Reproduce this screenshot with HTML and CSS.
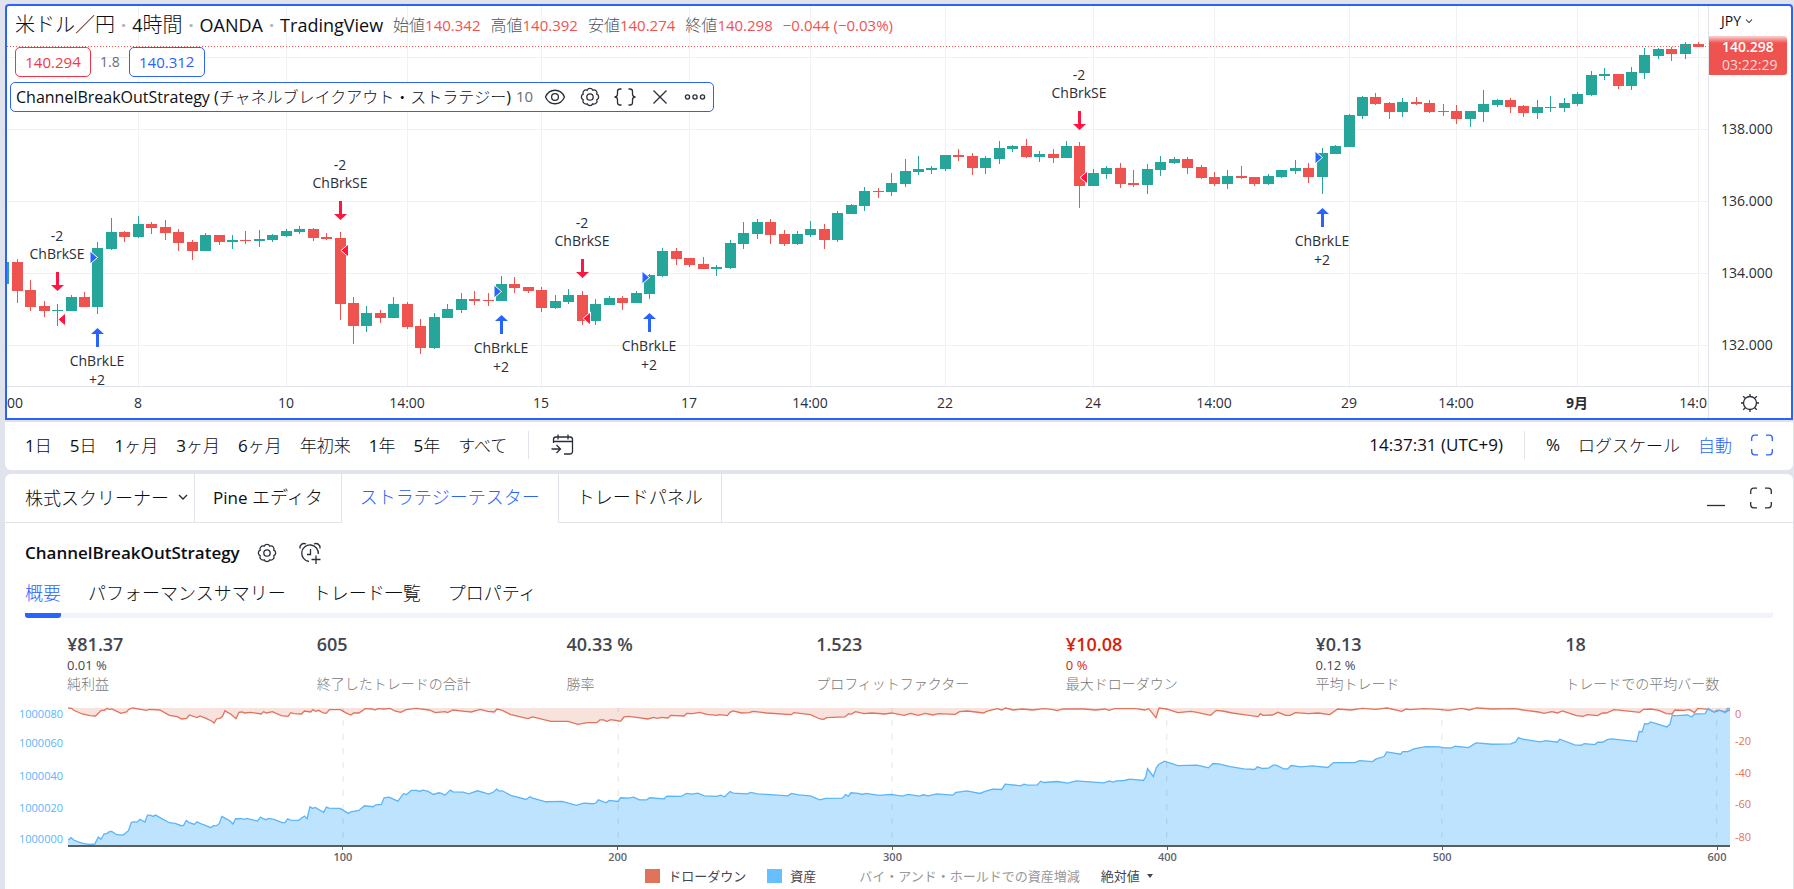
FILE: index.html
```html
<!DOCTYPE html>
<html lang="ja">
<head>
<meta charset="utf-8">
<title>米ドル／円 4時間</title>
<link rel="stylesheet" href="styles.css">
</head>
<body>
<svg class="defs" aria-hidden="true">
  <symbol id="gear" viewBox="0 0 24 24"><path d="M18.800 14.800A3.050 3.050 0 0 1 14.800 18.800A3.050 3.050 0 0 1 9.200 18.800A3.050 3.050 0 0 1 5.200 14.800A3.050 3.050 0 0 1 5.200 9.200A3.050 3.050 0 0 1 9.200 5.200A3.050 3.050 0 0 1 14.800 5.200A3.050 3.050 0 0 1 18.800 9.200A3.050 3.050 0 0 1 18.800 14.800Z"/><circle cx="12" cy="12" r="3.2"/></symbol>
  <symbol id="expand" viewBox="0 0 24 24"><path d="M1.700 8V5.200a3 3 0 0 1 3-3H8M16 2.200h3.300a3 3 0 0 1 3 3V8M22.300 16v2.800a3 3 0 0 1-3 3H16M8 21.800H4.700a3 3 0 0 1-3-3V16"/></symbol>
  <symbol id="chev" viewBox="0 0 10 8"><path d="M1 2l4 4 4-4"/></symbol>
</svg>

<main class="app">
  <section class="chart">
    <div class="plot">
      <svg class="canvas" id="price" viewBox="7 6 1701 412" preserveAspectRatio="xMaxYMin slice"></svg>
      <div class="overlay">
        <h1 class="symbol">
          <span><span class="jp">米ドル／円</span></span><i>·</i><span>4<span class="jp">時間</span></span><i>·</i><span>OANDA</span><i>·</i><span>TradingView</span>
        </h1>
        <dl class="ohlc">
          <div><dt>始値</dt><dd>140.342</dd></div>
          <div><dt>高値</dt><dd>140.392</dd></div>
          <div><dt>安値</dt><dd>140.274</dd></div>
          <div><dt>終値</dt><dd>140.298</dd></div>
          <div><dd>−0.044 (−0.03%)</dd></div>
        </dl>
        <div class="quote">
          <button class="sell">140.29<sup>4</sup></button>
          <span>1.8</span>
          <button class="buy">140.31<sup>2</sup></button>
        </div>
        <div class="study">
          <span class="name">ChannelBreakOutStrategy (<span class="jp">チャネルブレイクアウト・ストラテジー</span>)</span>
          <span class="arg">10</span>
          <button aria-label="表示"><svg class="ic" viewBox="0 0 24 24"><path d="M2.500 12C6.500 3 17.500 3 21.500 12C17.500 21 6.500 21 2.500 12Z"/><circle cx="12" cy="12" r="3.400"/></svg></button>
          <button aria-label="設定"><svg class="ic"><use href="#gear"/></svg></button>
          <button aria-label="ソース"><svg class="ic" viewBox="0 0 24 24"><path d="M8.500 4H7q-2.500 0-2.500 2.500V9q0 3-3 3q3 0 3 3v2.500Q4.500 20 7 20H8.500M15.500 4H17q2.500 0 2.500 2.500V9q0 3 3 3q-3 0-3 3v2.500q0 2.500-2.500 2.500H15.500"/></svg></button>
          <button aria-label="削除"><svg class="ic" viewBox="0 0 24 24"><path d="M5.500 5.500l13 13M18.500 5.500l-13 13"/></svg></button>
          <button aria-label="その他"><svg class="ic" viewBox="0 0 24 24"><circle cx="4.500" cy="12" r="2.100"/><circle cx="12" cy="12" r="2.100"/><circle cx="19.500" cy="12" r="2.100"/></svg></button>
        </div>
      </div>
    </div>
    <aside class="scale">
      <button class="currency">JPY <svg class="chev"><use href="#chev"/></svg></button>
      <div class="last"><strong>140.298</strong><span>03:22:29</span></div>
      <ul><li>138.000</li><li>136.000</li><li>134.000</li><li>132.000</li></ul>
      <button class="corner" aria-label="軸の設定"><svg class="ic" viewBox="0 0 24 24"><circle cx="12" cy="12" r="6.500"/><path d="M12 3v2.500M12 18.500V21M3 12h2.500M18.500 12H21M5.200 5.200l2.200 2.200M16.600 16.600l2.200 2.200M18.800 5.200l-2.200 2.200M7.400 16.600l-2.200 2.200"/></svg></button>
    </aside>
  </section>

  <nav class="ranges">
    <button>1<span class="jp">日</span></button>
    <button>5<span class="jp">日</span></button>
    <button>1<span class="jp">ヶ月</span></button>
    <button>3<span class="jp">ヶ月</span></button>
    <button>6<span class="jp">ヶ月</span></button>
    <button><span class="jp">年初来</span></button>
    <button>1<span class="jp">年</span></button>
    <button>5<span class="jp">年</span></button>
    <button><span class="jp">すべて</span></button>
    <hr>
    <button aria-label="日付へ移動"><svg class="ic" viewBox="0 0 24 24"><path d="M3.500 10V6.500a2.500 2.500 0 0 1 2.500-2.500h14a2.500 2.500 0 0 1 2.500 2.500v12a2.500 2.500 0 0 1-2.500 2.500H14M3.500 8.500h19M8 1.500v5M18 1.500v5M1.500 16h9M6.500 12l4 4-4 4"/></svg></button>
    <div class="right">
      <button>14:37:31 (UTC+9)</button>
      <hr>
      <button>%</button>
      <button><span class="jp">ログスケール</span></button>
      <button class="on"><span class="jp">自動</span></button>
      <button class="on" aria-label="最大化"><svg class="ic"><use href="#expand"/></svg></button>
    </div>
  </nav>

  <section class="panel">
    <nav class="tabs">
      <button class="first"><span class="jp">株式スクリーナー</span><svg class="chev"><use href="#chev"/></svg></button>
      <button>Pine <span class="jp">エディタ</span></button>
      <button class="active"><span class="jp">ストラテジーテスター</span></button>
      <button><span class="jp">トレードパネル</span></button>
      <div class="tools">
        <button aria-label="最小化"><svg class="ic" viewBox="0 0 24 24"><path d="M3 19.500h18"/></svg></button>
        <button aria-label="最大化"><svg class="ic"><use href="#expand"/></svg></button>
      </div>
    </nav>
    <div class="report">
      <header class="head">
        <h2>ChannelBreakOutStrategy</h2>
        <button aria-label="設定"><svg class="ic"><use href="#gear"/></svg></button>
        <button aria-label="アラート追加"><svg class="ic" viewBox="0 0 24 24"><path d="M11 20.500a8.300 8.300 0 1 1 9.300-7.500M12.500 8v5.500H9M2 7.500C1.500 4 4.500 1.500 8 3M22 7.500C22.500 4 19.500 1.500 16 3M18 14.500v8.500M13.500 18.500h9"/></svg></button>
      </header>
      <nav class="views">
        <a class="active" href="#overview">概要</a>
        <a href="#performance">パフォーマンスサマリー</a>
        <a href="#trades">トレード一覧</a>
        <a href="#properties">プロパティ</a>
      </nav>
      <ul class="stats">
        <li><strong>¥81.37</strong><span>0.01 %</span><em>純利益</em></li>
        <li><strong>605</strong><span></span><em>終了したトレードの合計</em></li>
        <li><strong>40.33 %</strong><span></span><em>勝率</em></li>
        <li><strong>1.523</strong><span></span><em>プロフィットファクター</em></li>
        <li class="loss"><strong>¥10.08</strong><span>0 %</span><em>最大ドローダウン</em></li>
        <li><strong>¥0.13</strong><span>0.12 %</span><em>平均トレード</em></li>
        <li><strong>18</strong><span></span><em>トレードでの平均バー数</em></li>
      </ul>
      <div class="equity">
        <ul class="yl"><li>1000080</li><li>1000060</li><li>1000040</li><li>1000020</li><li>1000000</li></ul>
        <svg id="equity" viewBox="178 52 4343 415" preserveAspectRatio="none"></svg>
        <ul class="yr"><li>0</li><li>-20</li><li>-40</li><li>-60</li><li>-80</li></ul>
        <ul class="xl"><li>100</li><li>200</li><li>300</li><li>400</li><li>500</li><li>600</li></ul>
      </div>
      <footer class="legend">
        <button class="dd">ドローダウン</button>
        <button class="eq">資産</button>
        <button class="bh">バイ・アンド・ホールドでの資産増減</button>
        <button class="abs">絶対値</button>
      </footer>
    </div>
  </section>
</main>
<script src="chart.js"></script>
</body>
</html>
```
FILE: styles.css
```css
* { box-sizing: border-box; margin: 0; padding: 0; }
body {
  background: #e0e3eb;
  color: #0c0e15;
  font: 17px/24px "Open Sans", "Noto Sans CJK JP", sans-serif;
}
ul { list-style: none; }
button { border: 0; background: none; font: inherit; color: inherit; white-space: nowrap; }
em, i { font-style: normal; }
.defs { position: absolute; width: 0; height: 0; }
.ic { display: block; width: 24px; height: 24px; fill: none; stroke: #2a2e39; stroke-width: 1.3; }
.chev { width: 10px; height: 8px; fill: none; stroke: #2a2e39; stroke-width: 1.4; }
.jp { font-family: "Noto Sans CJK JP", sans-serif; font-weight: 300; font-size: 18px; }

.app { display: flex; flex-direction: column; min-height: 100vh; padding: 4px 1px 0 5px; }

.chart { display: flex; height: 416px; background: #fff; border: 2px solid #2962ff; border-radius: 4px 4px 0 0; }
.plot { position: relative; flex: 1; min-width: 0; }
.canvas { display: block; width: 100%; height: 412px; }
.canvas text { font-size: 14px; fill: #2a2e39; text-anchor: middle; }
.canvas .bold { font-weight: 700; }
.canvas .start { text-anchor: start; }
.canvas .end { text-anchor: end; }
.overlay {
  position: absolute; top: 5px; left: 3px; right: 0;
  display: grid; grid-template-columns: max-content 1fr; justify-items: start;
}
.symbol { display: flex; align-items: baseline; gap: 6px; padding-left: 5px; font-size: 18px; font-weight: 400; line-height: 26px; }
.symbol .jp { font-size: 20px; }
.symbol i { color: #b2b5be; font-weight: 700; }
.ohlc { display: flex; gap: 10px; padding-left: 10px; font-size: 15px; line-height: 28px; color: #ef5350; white-space: nowrap; }
.ohlc div { display: flex; }
.ohlc dt { font-size: 16px; font-weight: 300; color: #50535e; }
.quote { grid-column: 1 / -1; display: flex; align-items: center; gap: 9px; padding: 8px 0 5px 5px; height: 43px; font-size: 15px; color: #6a6d78; }
.quote button { width: 76px; height: 30px; border: 1px solid; border-radius: 5px; background: #fff; line-height: 26px; }
.quote sup { font-size: 15px; line-height: 0; vertical-align: 1px; }
.quote span { font-size: 14px; }
.quote .sell { color: #f23645; }
.quote .buy { color: #2962ff; }
.study {
  grid-column: 1 / -1; display: flex; align-items: center; height: 30px; padding: 0 6px 0 5px;
  background: #fff; border: 1px solid #2962ff; border-radius: 5px; font-size: 16px; white-space: nowrap;
}
.study span { padding-bottom: 2px; }
.study .jp { font-size: 16px; }
.study .arg { padding: 0 10px 2px 5px; font-size: 15px; color: #6a6d78; }
.study button { width: 24px; margin-right: 11px; }
.study button:last-child { margin-right: 0; }

.scale { display: flex; flex-direction: column; width: 83px; border-left: 1px solid #e0e3eb; font-size: 14px; }
.currency { height: 30px; padding-left: 12px; text-align: left; }
.currency .chev { width: 8px; height: 6px; margin-bottom: 2px; }
.last {
  height: 39px; margin-right: 4px; padding: 2px 0 0 13px; border-radius: 0 3px 3px 0;
  background: linear-gradient(#fbd3d2, #ef5350 7px); color: #fff; font-size: 14px; line-height: 18px;
}
.last strong, .last span { display: block; font-weight: 600; }
.last span { font-weight: 400; color: #fcdcdc; }
.scale ul { padding: 18px 0 5px 12px; }
.scale li { line-height: 72px; color: #2a2e39; }
.corner { flex: 1; display: flex; align-items: center; justify-content: center; border-top: 1px solid #e0e3eb; }

.ranges { display: flex; align-items: center; gap: 18px; height: 48px; margin-top: 2px; padding: 0 19px 2px 20px; background: #fff; border-radius: 0 0 6px 6px; }
.ranges .jp { font-size: 17px; }
.ranges hr { width: 1px; height: 28px; margin: 0 3px; border: 0; background: #e0e3eb; }
.right { display: flex; align-items: center; gap: 18px; margin-left: auto; }
.on { color: #2962ff; }
.on .ic { stroke: #2962ff; }

.panel { flex: 1; margin-top: 4px; background: #fff; border-radius: 6px 6px 0 0; }
.tabs { display: flex; height: 49px; border-bottom: 1px solid #e0e3eb; }
.tabs > button { height: 49px; padding: 0 18px 2px; border-right: 1px solid #e0e3eb; border-bottom: 1px solid #e0e3eb; }
.tabs > .first { display: flex; align-items: center; gap: 9px; padding: 0 6px 2px 20px; }
.tabs > .active { color: #2962ff; border-bottom-color: #fff; }
.tools { display: flex; align-items: center; gap: 21px; margin-left: auto; padding-right: 20px; }

.report { padding: 0 20px; }
.head { display: flex; align-items: center; gap: 15px; height: 59px; }
.head h2 { font-size: 17px; font-weight: 600; }
.head .ic { width: 24px; height: 24px; }
.head button { width: 28px; }
.views { display: flex; gap: 27px; height: 36px; border-radius: 3px; font: 300 18px/20px "Noto Sans CJK JP", sans-serif; box-shadow: inset 0 -5px #f0f3fa; }
.views a { color: inherit; text-decoration: none; }
.views .active { color: #2962ff; border-bottom: 5px solid #2962ff; border-radius: 3px; }

.stats { display: grid; grid-template-columns: repeat(7, 1fr); padding-top: 14px; }
.stats li { display: flex; flex-direction: column; padding-left: 42px; color: #434651; white-space: nowrap; }
.stats strong { font-size: 18px; font-weight: 600; line-height: 24px; }
.stats span { height: 17px; font-size: 13px; line-height: 18px; }
.stats em { font: 300 14px/20px "Noto Sans CJK JP", sans-serif; color: #787878; }
.stats .loss strong, .stats .loss span { color: #d91e0b; }

.equity { display: grid; grid-template-columns: 51px 1fr 43px; grid-template-rows: 140px 18px; margin-left: -8px; padding-top: 14px; font-size: 11px; line-height: 13px; }
#equity { display: block; width: 100%; height: 140px; border-bottom: 2px solid #5a5f5c; }
.yl, .yr { display: grid; align-content: start; align-items: end; }
.yl { grid-template-rows: 13px 29px 33px 32px 31px; padding-right: 5px; color: #5bb5ff; text-align: right; }
.yr { grid-template-rows: 13px 27px 32px 31px 33px; padding-left: 5px; color: #e1735b; }
.xl { grid-column: 2; display: grid; grid-template-columns: 275fr repeat(5, 275fr) 13fr; color: #61646c; font-weight: 600; }
.xl li { display: flex; flex-direction: column; align-items: center; width: 0; justify-self: end; }
.xl li::before { content: ""; width: 1px; height: 3px; background: #5a5f5c; }

.legend { display: flex; justify-content: center; gap: 21px; height: 22px; font: 400 13px/20px "Noto Sans CJK JP", sans-serif; color: #434651; }
.legend button { display: flex; align-items: center; }
.dd::before, .eq::before { content: ""; width: 15px; height: 14px; margin-right: 8px; background: #e1735b; }
.eq::before { background: #68bfff; }
.bh { padding-left: 22px; color: #999; }
.abs::after { content: ""; margin-left: 7px; border: 3px solid transparent; border-top: 4px solid #434651; border-bottom: 0; }
```
FILE: chart.js
```js
const NS = 'http://www.w3.org/2000/svg';
function add(parent, tag, attrs, text) {
  const el = document.createElementNS(NS, tag);
  for (const k in attrs) el.setAttribute(k, attrs[k]);
  if (text) el.textContent = text;
  parent.appendChild(el);
}

// colour, high, body top, body bottom, low
const bars = `g 262 262 284 284|r 259 262 291 303|r 280 290 307 311|r 301 306 311 317|g 304 310 311 326|g 295 297 311 311|r 292 297 307 307|g 242 248 307 314|g 218 232 249 250|r 231 232 237 242
g 216 224 237 238|r 222 224 228 234|r 220 227 233 240|r 229 232 243 251|r 240 242 251 260|g 233 235 251 251|r 235 235 242 245|g 235 240 242 249|r 231 240 241 244|g 230 239 241 247
g 234 235 240 242|g 229 231 236 237|g 226 229 232 234|r 228 229 238 241|r 233 237 239 240|r 232 238 304 320|r 297 303 326 344|g 306 313 326 332|r 310 313 318 323|g 297 304 318 318
r 302 304 327 329|r 319 326 348 354|g 313 317 348 349|g 304 309 318 318|g 293 299 310 313|r 291 299 301 305|r 293 300 301 306|g 276 284 301 301|r 277 284 288 293|r 287 287 291 293
r 287 290 308 312|g 295 301 308 309|g 289 295 302 304|r 291 295 321 325|g 299 304 321 325|g 296 298 305 305|r 296 298 303 310|g 291 293 303 303|g 274 275 294 299|g 248 251 276 277
r 248 251 259 265|r 258 258 265 267|r 257 264 269 269|g 265 267 269 276|g 240 243 268 269|g 222 233 244 249|g 219 222 234 239|r 219 222 235 244|r 230 234 244 246|g 231 234 244 245
g 221 229 235 237|r 224 229 240 249|g 211 213 240 242|g 204 205 214 214|g 187 191 206 211|r 188 191 192 198|g 173 183 192 196|g 159 171 184 187|g 156 169 172 175|g 166 168 170 174
g 155 155 169 171|r 149 155 157 161|r 153 156 168 175|g 156 158 168 174|g 141 148 159 164|g 145 146 149 152|r 139 146 157 158|g 151 154 157 162|r 149 154 158 163|g 141 146 158 158
r 142 146 186 208|g 169 173 186 186|g 166 168 174 179|r 163 168 184 188|r 170 183 185 187|g 164 169 185 194|g 156 162 170 176|g 157 159 163 164|r 157 159 168 174|r 165 167 178 179
r 172 177 184 186|g 170 176 184 189|r 166 176 178 179|r 177 177 184 186|g 174 176 184 185|g 170 170 177 178|g 160 168 171 174|r 163 168 177 183|g 148 153 177 194|g 145 146 154 154
g 114 115 147 147|g 96 97 116 119|r 93 97 104 105|r 102 103 112 119|g 98 102 112 117|r 97 102 104 105|r 100 103 112 113|r 104 111 112 116|r 105 111 119 124|g 111 111 119 127
g 90 104 112 122|g 99 100 105 107|r 98 100 107 113|r 105 106 113 117|g 100 107 113 119|g 96 107 108 112|g 98 103 108 112|g 92 94 104 106|g 71 75 95 96|g 68 74 76 80
r 74 74 86 89|g 67 72 86 90|g 48 55 73 79|g 48 49 56 59|r 47 49 54 61|g 42 44 54 59|r 42 44 47 47`.split(/[|\n]/).map(b => b.split(' '));

const FIRST = -10, barX = k => Math.round(137.8 + 13.4525 * k);
const price = document.getElementById('price');

for (const y of [57, 129, 201, 273, 345]) add(price, 'rect', { x: -2000, y, width: 3708, height: 1, fill: '#f0f1f3' });
const times = [[0, '8'], [11, '10'], [20, '14:00'], [30, '15'], [41, '17'], [50, '14:00'], [60, '22'],
  [71, '24'], [80, '14:00'], [90, '29'], [98, '14:00'], [107, '9月'], [116, '']];
for (const [k, label] of times) {
  const x = barX(k);
  add(price, 'rect', { x, y: 6, width: 1, height: 380, fill: '#f0f1f3' });
  if (label) add(price, 'text', { x, y: 408, class: label === '9月' ? 'bold' : '' }, label);
}
add(price, 'text', { x: 7, y: 408, class: 'start' }, '00');
add(price, 'text', { x: 1707, y: 408, class: 'end' }, '14:0');
add(price, 'rect', { x: -2000, y: 386, width: 3708, height: 1, fill: '#e0e3eb' });

bars.forEach(([c, hi, top, bottom, lo], i) => {
  const x = barX(i + FIRST), fill = c === 'g' ? '#26a69a' : '#ef5350';
  add(price, 'rect', { x, y: hi, width: 1, height: lo - hi, fill });
  add(price, 'rect', { x: x - 5, y: top, width: 11, height: bottom - top, fill });
});
add(price, 'path', { d: 'M7 46.5H1708', stroke: '#ef5350', 'stroke-dasharray': '1 2' });

// side, x, arrow top, fill price marker y
const orders = [['S', 57, 272, 319], ['L', 97, 328, 257], ['S', 340, 201, 250], ['L', 501, 315, 291],
  ['S', 582, 259, 318], ['L', 649, 313, 277], ['S', 1079, 111, 177], ['L', 1322, 208, 157]];
for (const [side, x, y, m] of orders) {
  if (side === 'S') {
    add(price, 'path', { d: `M${x - 1} ${y}h3v13h5l-6.500 6l-6.500-6h5z`, fill: '#ff1744' });
    add(price, 'path', { d: `M${x + 1} ${m + .5}l7.500-6.500v13z`, fill: '#ff1744', stroke: '#fff' });
    add(price, 'text', { x, y: y - 31 }, '-2');
    add(price, 'text', { x, y: y - 13 }, 'ChBrkSE');
  } else {
    add(price, 'path', { d: `M${x - 1} ${y + 19}h3v-13h5l-6.500-6l-6.500 6h5z`, fill: '#2962ff' });
    add(price, 'path', { d: `M${x + .5} ${m + .5}l-7.500-6.500v13z`, fill: '#2962ff', stroke: '#fff' });
    add(price, 'text', { x, y: y + 38 }, 'ChBrkLE');
    add(price, 'text', { x, y: y + 57 }, '+2');
  }
}

// Each series comes in three pages; points of a page are relative to its origin.
const origins = [0, 1568, 3120];
const equityPages = [
  '178,452 186,445 193,452 208,459 220,463 234,465 248,464 257,443 264,450 272,434 280,432 286,427 292,426 306,436 322,437 336,424 343,400 350,397 358,399 366,390 379,398 386,377 393,377 400,381 407,377 422,387 443,400 458,402 474,409 480,408 487,393 494,399 508,405 515,397 523,402 537,408 551,415 558,409 566,409 573,403 580,381 588,386 601,394 609,404 616,388 624,388 630,387 638,390 645,387 673,395 681,383 688,388 695,391 702,387 716,390 738,400 745,400 752,388 759,392 780,393 796,380 803,388 810,352 817,357 824,354 846,369 853,353 860,356 889,357 911,372 917,367 938,363 953,349 975,352 982,346 997,345 1004,325 1017,323 1040,335 1055,312 1062,316 1075,303 1088,303 1097,306 1105,302 1118,305 1133,315 1147,310 1154,312 1163,317 1177,302 1184,307 1210,308 1225,313 1248,304 1278,314 1291,307 1298,299 1305,305 1313,304 1335,318 1375,330 1385,322 1392,326 1427,337 1470,336 1506,348 1526,341 1550,343 1558,340 1564,331',
  '0,333 16,340 24,333 47,336 54,325 75,326 88,323 103,331 122,331 130,325 168,328 175,320 212,321 226,312 240,314 256,311 273,319 305,321 315,317 326,322 340,306 348,311 385,313 394,309 412,313 455,316 491,319 500,312 520,316 550,319 574,331 590,327 634,326 642,315 649,321 656,310 675,312 685,315 695,312 730,318 760,315 790,320 805,315 835,320 845,316 858,319 880,313 922,317 930,309 942,307 958,304 993,312 1003,307 1025,299 1050,300 1059,284 1100,289 1108,284 1118,287 1143,286 1152,275 1160,279 1195,276 1222,281 1245,274 1317,280 1331,274 1340,278 1350,274 1370,273 1385,269 1420,273 1426,264 1431,237 1446,261 1454,235 1460,225 1475,215 1510,228 1560,227',
  '20,230 38,235 50,222 65,223 95,231 130,238 159,240 166,232 180,237 195,236 207,227 215,227 235,238 245,238 254,228 280,232 310,229 350,234 365,219 420,219 433,213 467,216 475,209 497,201 504,187 540,194 546,186 560,186 575,178 606,171 640,172 655,175 674,175 683,170 718,174 737,160 780,164 828,163 841,157 848,144 860,149 905,157 920,153 950,158 956,149 995,166 1012,167 1020,162 1048,165 1055,158 1068,158 1080,150 1092,148 1157,156 1164,125 1171,127 1178,102 1186,103 1194,97 1236,112 1244,104 1250,77 1262,78 1290,76 1301,82 1308,73 1336,72 1344,56 1358,67 1373,61 1388,69 1394,56 1401,56'];
const drawdownPages = [
  '178,55 188,56 193,62 215,73 235,78 250,79 265,62 273,62 280,56 287,60 293,58 316,71 331,67 337,59 347,55 372,60 383,62 390,59 418,61 443,77 463,81 475,88 488,86 495,76 515,84 523,79 540,87 553,94 560,100 566,88 575,86 582,80 588,63 595,68 603,73 617,87 625,68 632,67 640,70 655,68 683,73 689,66 697,70 712,66 735,78 753,80 760,69 768,72 788,73 796,64 812,67 818,60 825,65 833,62 845,70 853,71 861,60 890,60 903,69 917,76 925,70 938,70 955,57 973,58 980,61 988,57 1005,58 1020,56 1032,64 1047,68 1062,60 1088,56 1122,61 1138,69 1163,66 1170,69 1184,61 1215,65 1232,67 1255,59 1275,65 1292,67 1299,58 1313,62 1335,75 1380,87 1392,82 1440,95 1485,95 1510,104 1535,99 1560,99',
  '0,91 10,91 18,96 28,90 45,93 54,95 63,82 75,80 100,84 125,88 140,83 150,86 160,83 178,85 185,77 220,79 227,71 242,72 260,68 280,74 305,77 312,75 333,78 340,68 348,64 370,70 390,69 400,65 435,70 500,75 507,69 550,75 575,88 585,89 592,84 640,82 650,72 656,74 668,66 690,72 710,70 745,73 762,70 795,77 812,71 832,77 850,71 870,76 885,72 928,74 940,66 960,64 1003,70 1010,65 1038,57 1050,61 1060,55 1080,61 1105,58 1130,61 1160,57 1180,59 1195,63 1210,58 1265,58 1295,61 1320,58 1330,62 1345,57 1400,57 1424,61 1434,57 1453,84 1461,55 1480,58 1510,69 1545,65 1560,68',
  '20,71 44,77 58,62 75,64 100,70 130,75 168,81 174,72 180,77 205,76 220,68 240,77 252,77 265,69 300,72 325,70 355,75 376,58 410,61 440,56 475,59 505,55 543,65 555,58 565,60 600,57 640,59 665,62 700,56 720,61 738,55 780,58 840,57 860,61 900,67 915,71 935,66 950,70 963,64 1000,78 1018,80 1028,75 1055,78 1068,70 1078,70 1098,60 1165,68 1175,59 1195,58 1215,62 1235,72 1250,73 1257,61 1280,62 1295,60 1308,69 1317,56 1345,59 1360,67 1373,62 1390,67 1401,60'];
const join = pages => pages.map((p, i) => p.split(' ').map(q => {
  const [x, y] = q.split(',').map(Number);
  return (x + origins[i]) + ' ' + y;
}).join('L')).join('L');

const equity = document.getElementById('equity');
const eq = join(equityPages), dd = join(drawdownPages);
const line = { fill: 'none', 'stroke-width': 1.3, 'vector-effect': 'non-scaling-stroke' };
add(equity, 'path', { d: `M178 55L${dd}L4521 55Z`, fill: '#f8e2dd' });
add(equity, 'path', { d: `M${dd}`, stroke: '#e1735b', ...line });
add(equity, 'path', { d: `M178 467L${eq}L4521 467Z`, fill: '#5cb8ff', 'fill-opacity': .4 });
add(equity, 'path', { d: `M${eq}`, stroke: '#5bb5f9', ...line });
for (const x of [897, 1616, 2331, 3049, 3768, 4486])
  add(equity, 'path', { d: `M${x} 467V55`, stroke: '#000', 'stroke-opacity': .08, 'stroke-dasharray': '0 7 6 1', ...line });
```
